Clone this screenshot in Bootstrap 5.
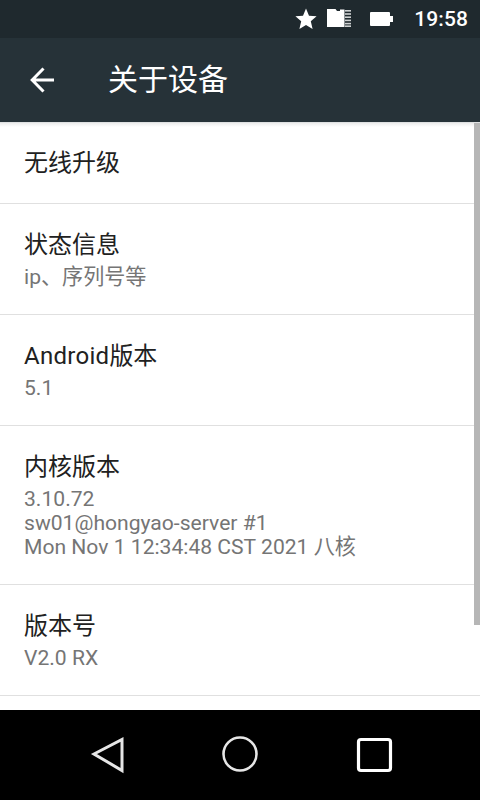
<!DOCTYPE html>
<html lang="zh">
<head>
<meta charset="utf-8">
<title>关于设备</title>
<link href="https://cdn.jsdelivr.net/npm/bootstrap@5.3.0/dist/css/bootstrap.min.css" rel="stylesheet">
<style>
html,body{height:100%;overflow:hidden}
body{font-family:Roboto,"Noto Sans CJK SC",sans-serif;background:#fff}
.phone{width:480px;height:800px;overflow:hidden}
.status-strip{height:38px;background:#1f292e;color:#fff;font-size:21px;font-weight:500;padding-right:12px}
.status-time{margin-left:21px;line-height:38px;letter-spacing:.1px}
.app-bar{height:84px;background:#263238;color:#fff;padding-left:30px;gap:54px}
.app-title{font-size:30px;line-height:40px}
.shade{height:1px;background:#dfe1e2;flex:none}
.scroll-area{flex:1 1 auto;min-height:0;position:relative;overflow:hidden}
.scroll-area::before{content:"";position:absolute;top:0;left:0;right:0;height:4px;background:linear-gradient(#ececec,#fff)}
.list-group-flush>.list-group-item.info-row{border:0;border-bottom:1px solid #e0e0e0;border-radius:0;padding:25px 24px;color:#212121;background:transparent}
.list-group-flush>.list-group-item.info-row.solo{padding:24px}
.row-title{font-size:24px;line-height:32px;color:#212121}
.latin-run{letter-spacing:.28px}
.row-sub{font-size:21.1px;line-height:24px;color:#757575;margin-top:4px}
.thumb{position:absolute;top:0;right:0;width:6px;height:502px;background:#b6b6b6}
.nav-strip{height:90px;background:#000;flex:none;position:relative}
.status-icon{display:block;flex:none}
.star-icon{margin-right:10px;margin-left:-1px}
.card-icon{margin-right:18px;margin-top:-3px}
</style>
</head>
<body>
<div class="phone d-flex flex-column">
  <div class="status-strip d-flex align-items-center justify-content-end flex-none">
    <svg class="status-icon star-icon" width="22" height="22" viewBox="0 0 22 22"><path fill="#fff" d="M11 0.5l3 7.2 7.6.6-5.8 5 1.8 7.6L11 17l-6.6 3.9 1.8-7.6-5.8-5 7.6-.6z"/></svg>
    <svg class="status-icon card-icon" width="25" height="18" viewBox="0 0 25 18"><path fill="#fff" d="M0 0h8.5l1.5 2h3V.5h4.5V18H0z"/><g fill="#cfd2d3"><rect x="18" y="1" width="6" height="1.6"/><rect x="18" y="4.2" width="6" height="1.6"/><rect x="18" y="7.4" width="6" height="1.6"/><rect x="18" y="10.6" width="6" height="1.6"/><rect x="18" y="13.8" width="6" height="1.6"/><rect x="18" y="16.4" width="6" height="1.6"/></g></svg>
    <svg class="status-icon" width="23" height="14" viewBox="0 0 23 14"><path fill="#fff" d="M0 1q0-1 1-1h18q1 0 1 1v3h3v6h-3v3q0 1-1 1H1q-1 0-1-1z"/></svg>
    <span class="status-time">19:58</span>
  </div>
  <div class="app-bar d-flex align-items-center">
    <svg width="24" height="26" viewBox="0 0 24 26" class="status-icon"><path fill="none" stroke="#fff" stroke-width="3" d="M24 13H3M13.5 1.5 2.2 13l11.3 11.5"/></svg>
    <div class="app-title">关于设备</div>
  </div>
  <div class="shade"></div>
  <div class="scroll-area">
    <div class="list-group list-group-flush">
      <div class="list-group-item info-row solo"><div class="row-title">无线升级</div></div>
      <div class="list-group-item info-row"><div class="row-title">状态信息</div><div class="row-sub">ip、序列号等</div></div>
      <div class="list-group-item info-row"><div class="row-title"><span class="latin-run">Android</span>版本</div><div class="row-sub">5.1</div></div>
      <div class="list-group-item info-row"><div class="row-title">内核版本</div><div class="row-sub">3.10.72<br>sw01@hongyao-server #1<br>Mon Nov 1 12:34:48 CST 2021 八核</div></div>
      <div class="list-group-item info-row"><div class="row-title">版本号</div><div class="row-sub">V2.0 RX</div></div>
    </div>
    <div class="thumb"></div>
  </div>
  <div class="nav-strip d-flex justify-content-center">
    <svg width="480" height="90" viewBox="0 0 480 90"><g fill="none" stroke="#e6e6e6" stroke-width="3"><path d="M94 44 122 29.5v31z"/><circle cx="240" cy="44" r="16.5" stroke-width="2.6"/><rect x="358.5" y="29.5" width="32" height="31" rx="2.5" stroke="#fff" stroke-width="3.2"/></g></svg>
  </div>
</div>
<script src="https://cdn.jsdelivr.net/npm/bootstrap@5.3.0/dist/js/bootstrap.bundle.min.js"></script>
</body>
</html>
